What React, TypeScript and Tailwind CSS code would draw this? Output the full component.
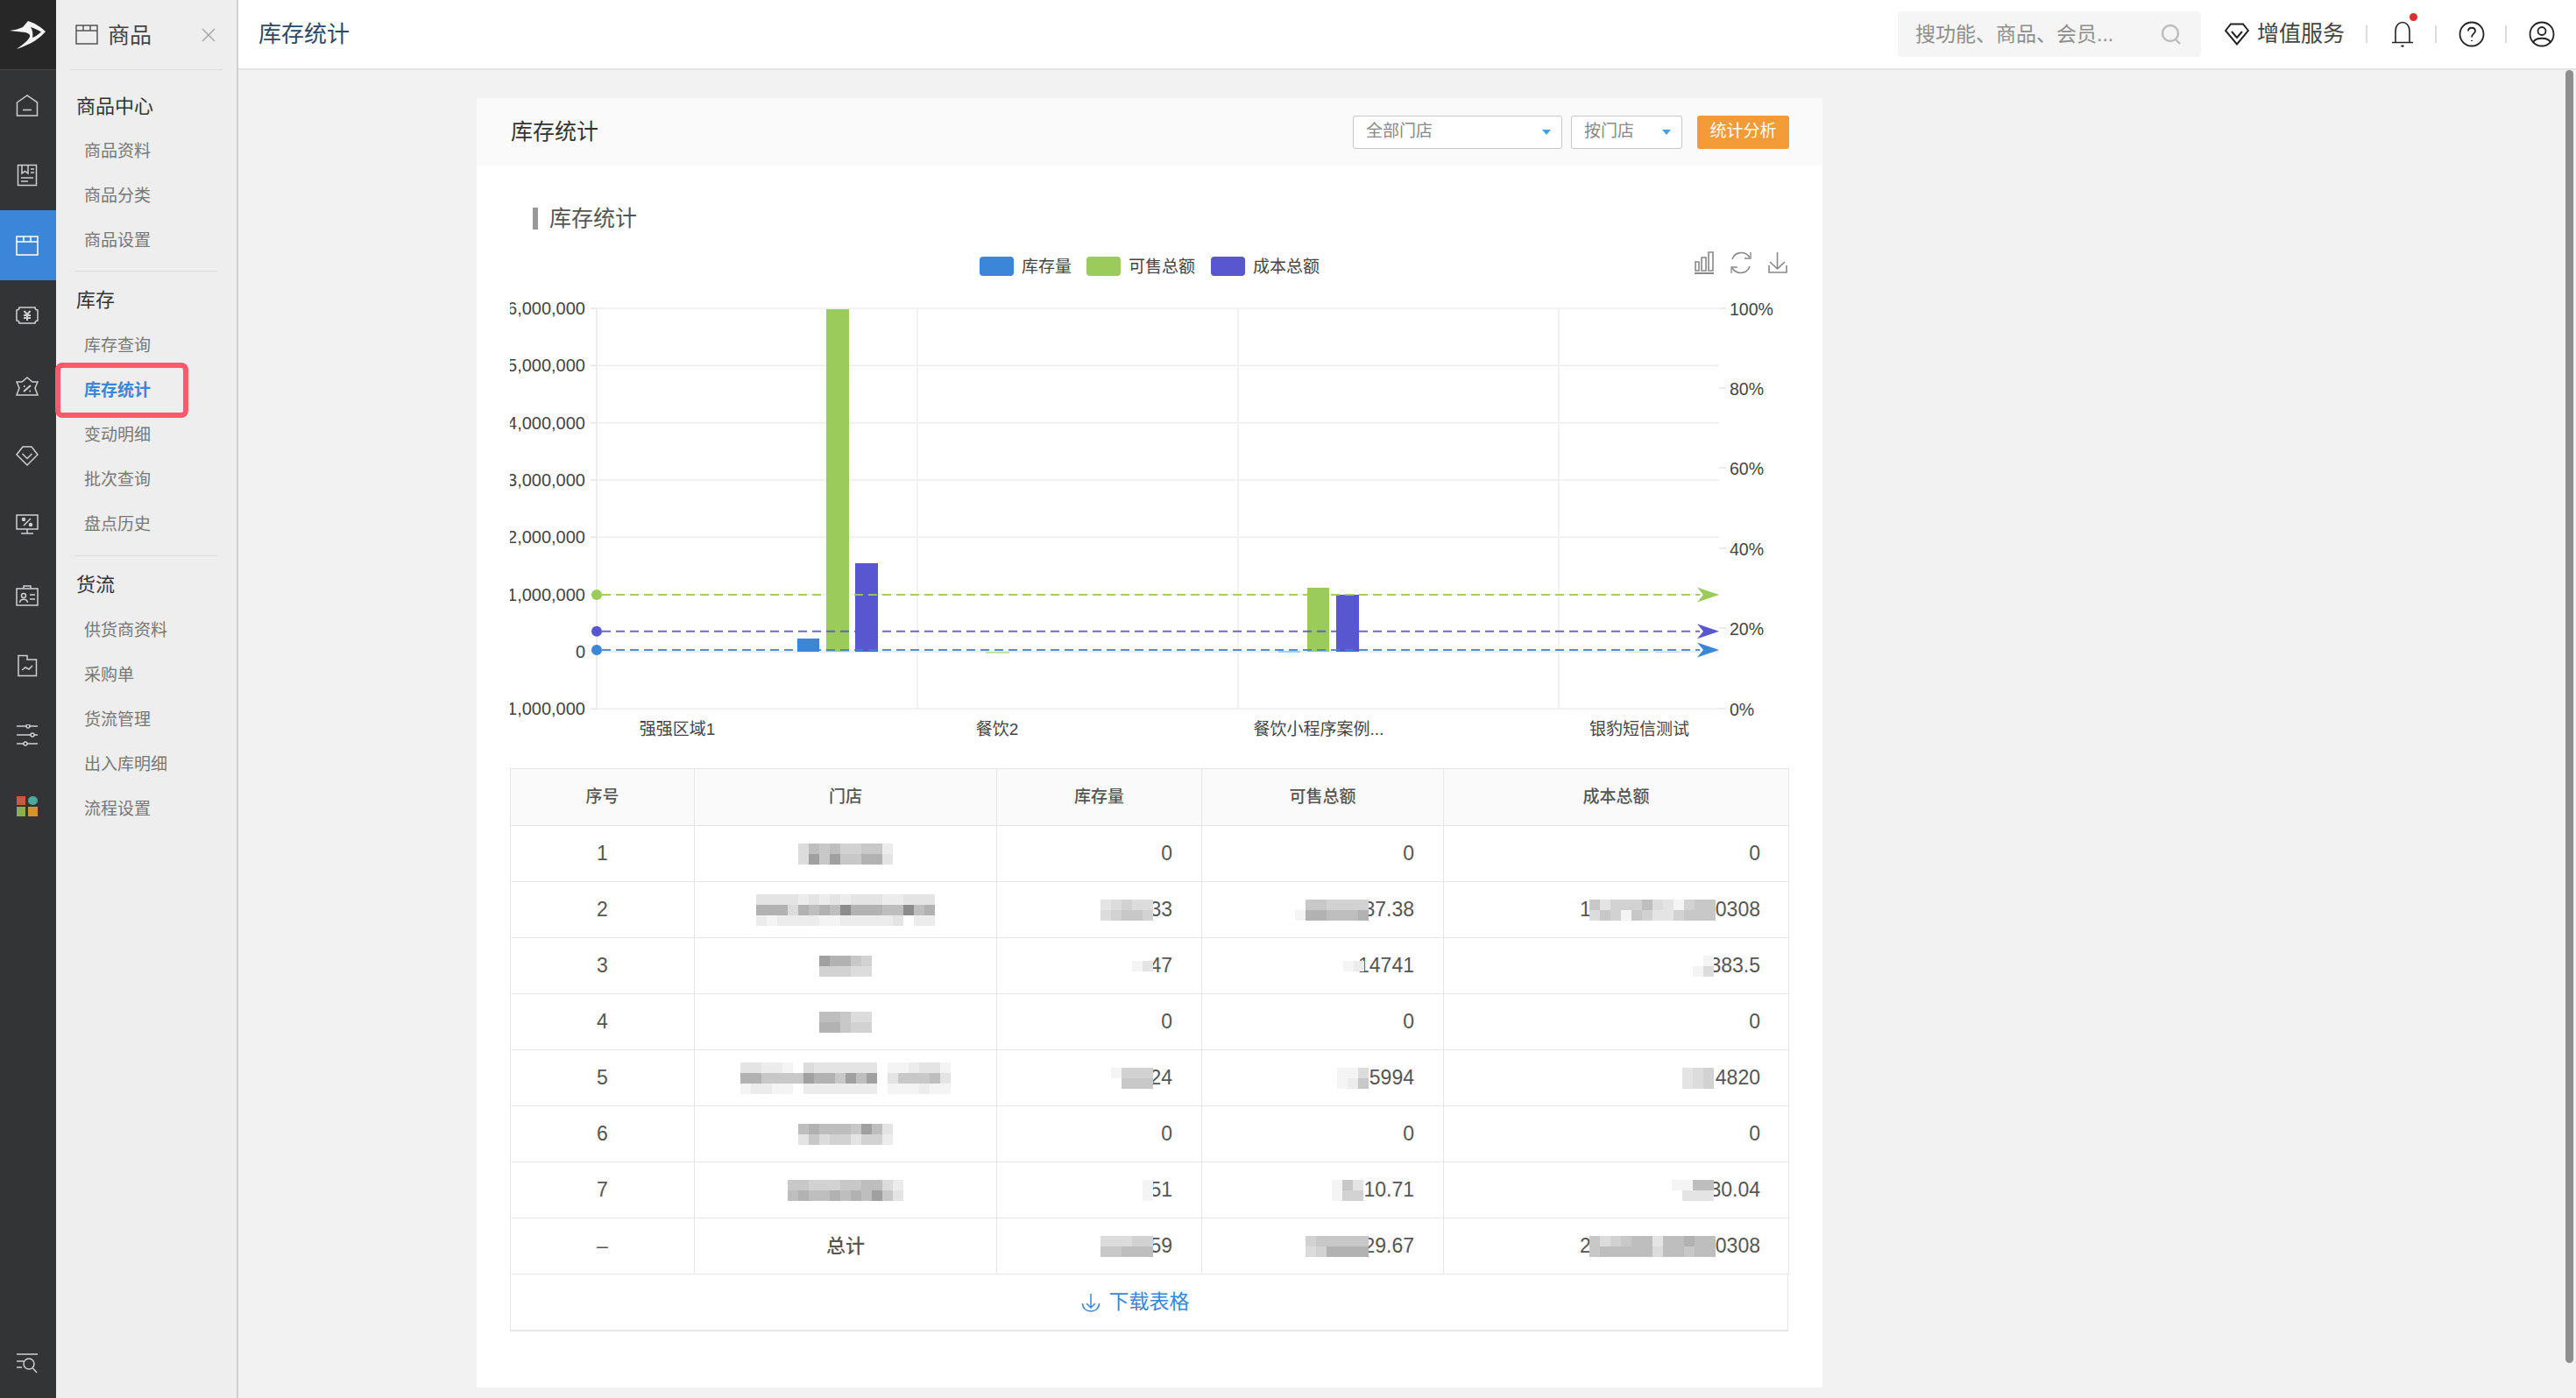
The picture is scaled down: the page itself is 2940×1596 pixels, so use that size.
import type { ReactNode } from 'react';

// grey steps of the pixelated masks, one character per 12px block
const shade: Record<string, string> = {
  '0': 'bg-transparent',
  '1': 'bg-[#f4f4f4]',
  '2': 'bg-[#ececec]',
  '3': 'bg-[#e4e4e4]',
  '4': 'bg-[#dcdcdc]',
  '5': 'bg-[#d2d2d2]',
  '6': 'bg-[#c8c8c8]',
  '7': 'bg-[#bebebe]',
  '8': 'bg-[#b2b2b2]',
  '9': 'bg-[#a0a0a0]',
  a: 'bg-[#8c8c8c]',
};

function Mosaic({ rows, className = '' }: { rows: string[]; className?: string }) {
  return (
    <div className={`relative z-10 flex flex-col shrink-0 ${className}`}>
      {rows.map((row, i) => (
        <div key={i} className="flex">
          {row.split('').map((c, j) => (
            <span key={j} className={`w-3 h-3 ${shade[c]}`} />
          ))}
        </div>
      ))}
    </div>
  );
}

function RailSvg({ children }: { children: ReactNode }) {
  return (
    <svg viewBox="0 0 26 26" className="w-[26px] h-[26px]" fill="none" stroke="currentColor" strokeWidth="1.5">
      {children}
    </svg>
  );
}

const railIcons: ReactNode[] = [
  <path key="home" d="M1.5 10 L13 2 L24.5 10 V25 H1.5 Z M8 18.5 H18" />,
  <g key="notes">
    <rect x="2.5" y="1.5" width="21" height="23" />
    <path d="M7 1.5 V11 L10.5 8.5 L14 11 V1.5 M17 6 H21 M17 10 H21 M6 16 H20 M6 20 H14" />
  </g>,
  <g key="box">
    <rect x="1" y="3" width="24" height="21" />
    <path d="M1 9 H9 V3 M17 3 V9 H25 M9 9 H17" />
  </g>,
  <g key="money">
    <path d="M4 4 H22 A3 3 0 0 0 25 7 V19 A3 3 0 0 0 22 22 H4 A3 3 0 0 0 1 19 V7 A3 3 0 0 0 4 4 Z" />
    <path d="M9.5 8 L13 12 L16.5 8 M9 13 H17 M9 16 H17 M13 12 V19" strokeWidth="2" />
  </g>,
  <g key="ticket">
    <path d="M1 9 H7 L13 4 L19 9 H25 L22 16 L25 24 H1 L4 16 Z" />
    <path d="M9 20 L17 13 M9 14 H10.5 M15.5 19.5 H17" strokeWidth="2" />
  </g>,
  <path key="gem" d="M8 3 H18 L25 12 L13 24 L1 12 Z M7.5 11 L13 16.5 L18.5 11" />,
  <g key="monitor">
    <rect x="1" y="1" width="24" height="16" />
    <path d="M13 17 V22 M6 22 H20 M9 13 L17 5" />
    <circle cx="9" cy="6" r="1.5" fill="currentColor" />
    <circle cx="17" cy="12" r="1.5" fill="currentColor" />
  </g>,
  <g key="badge">
    <rect x="1" y="5" width="24" height="19" />
    <path d="M9 5 V2 H17 V5 M4.5 21 C5 16 13 16 13.5 21 M16 12 H22 M16 17 H22" />
    <circle cx="9" cy="13" r="2.5" />
  </g>,
  <path key="folder" d="M3 1.5 H13 V6 H23.5 V24.5 H3 Z M7 18 L11 15 L15 17 L19 13" />,
  <g key="sliders">
    <path d="M1 2 H25 M1 12 H25 M1 22 H25" />
    <circle cx="14" cy="2" r="2" fill="#323436" />
    <circle cx="19" cy="12" r="2" fill="#323436" />
    <circle cx="11" cy="22" r="2" fill="#323436" />
  </g>,
];

function Rail() {
  return (
    <aside className="w-[64px] shrink-0 bg-[#323436] flex flex-col text-[#cfcfcf]">
      <div className="h-[80px] bg-[#272727] border-b border-[#444] flex items-center justify-center pr-px">
        <svg viewBox="0 0 42 34" className="w-[42px] h-[34px]" fill="#f4f4f4" fillRule="evenodd">
          <path d="M0 12 C6 11 11 10 15 8 C17 6 19 3 21 1 C28 3 36 8 41 13 C35 20 26 27 8 33 C13 29 20 25 23 19 C24 17 22 15 18 14 C12 13 6 13 0 12 Z M24 8 C28 9 32 11 36 13.5 C32 17 29 19 26 20 C27 16 26 11 24 8 Z" />
        </svg>
      </div>
      {railIcons.map((icon, i) => (
        <div key={i} className={`h-[80px] shrink-0 flex items-center justify-center pr-[3px] ${i === 2 ? 'bg-[#3b86d8] text-white' : ''}`}>
          <RailSvg>{icon}</RailSvg>
        </div>
      ))}
      <div className="h-[80px] shrink-0 flex items-center justify-center pr-[3px]">
        <svg viewBox="0 0 24 24" className="w-[24px] h-[24px]">
          <rect x="0" y="1" width="10" height="10" fill="#c85a38" />
          <ellipse cx="18.5" cy="6" rx="5.5" ry="5" fill="#4fa89c" />
          <rect x="0" y="13" width="10" height="11" fill="#8ab04a" />
          <rect x="13" y="13" width="11" height="11" fill="#d9902f" />
        </svg>
      </div>
      <div className="mt-auto h-[78px] flex items-center justify-center pr-[3px]">
        <RailSvg>
          <path d="M1 2 H25 M1 10 H9 M1 17 H7 M19.5 18 L24 23" />
          <circle cx="15" cy="13" r="6" />
        </RailSvg>
      </div>
    </aside>
  );
}

const sections = [
  { title: '商品中心', box: 'pt-[19px] pb-[8px]', gap: 'mb-[5px]', items: ['商品资料', '商品分类', '商品设置'] },
  { title: '库存', box: 'pt-[10px] pb-[9px]', gap: 'mb-[6px]', items: ['库存查询', '库存统计', '变动明细', '批次查询', '盘点历史'] },
  { title: '货流', box: 'pt-[10px]', gap: 'mb-[6px]', items: ['供货商资料', '采购单', '货流管理', '出入库明细', '流程设置'] },
];

function SubNav() {
  return (
    <nav className="w-[208px] shrink-0 bg-[#eeeeee] border-r-2 border-[#cfcfcf]">
      <div className="h-[80px] mx-[16px] border-b border-[#dcdcdc] flex items-center pl-[6px]">
        <svg viewBox="0 0 26 23" className="w-[26px] h-[23px]" fill="none" stroke="#555" strokeWidth="1.5">
          <rect x="1" y="1" width="24" height="21" />
          <path d="M1 7 H9 V1 M17 1 V7 H25 M9 7 H17" />
        </svg>
        <span className="ml-[11px] pt-[2px] text-[25px] text-[#444]">商品</span>
        <svg viewBox="0 0 16 16" className="ml-auto mr-[8px] w-[16px] h-[16px]" stroke="#aaa" strokeWidth="1.6">
          <path d="M1 1 L15 15 M15 1 L1 15" />
        </svg>
      </div>
      {sections.map((s, i) => (
        <div key={s.title} className={`mx-[22px] ${s.box} ${i < 2 ? 'border-b border-[#dcdcdc]' : ''}`}>
          <div className={`h-[44px] ${s.gap} flex items-center px-px text-[22px] text-[#333]`}>{s.title}</div>
          {s.items.map((item) => (
            <div
              key={item}
              className={`relative h-[51px] flex items-center pl-[10px] text-[19px] ${item === '库存统计' ? 'text-[#3b86d8] font-bold' : 'text-[#777]'}`}
            >
              {item}
              {item === '库存统计' && (
                <span className="absolute left-[-23px] right-[33px] top-[-7px] bottom-[-5px] border-[6px] border-[#fc5a6c] rounded-[8px] z-10" />
              )}
            </div>
          ))}
        </div>
      ))}
    </nav>
  );
}

function TopBar() {
  return (
    <header className="h-[80px] shrink-0 bg-white border-b-2 border-[#e3e3e3] flex items-center pl-[23px] pr-[24px]">
      <h1 className="text-[26px] text-[#2c4a66]">库存统计</h1>
      <div className="ml-auto w-[346px] h-[52px] bg-[#f5f5f5] rounded-[4px] flex items-center pl-[20px] pr-[22px]">
        <span className="text-[23px] text-[#8e8e8e]">搜功能、商品、会员...</span>
        <svg viewBox="0 0 24 24" className="ml-auto w-[24px] h-[24px]" fill="none" stroke="#bdbdbd" strokeWidth="2.4">
          <circle cx="11" cy="11" r="9" />
          <path d="M17 18 L22 23" />
        </svg>
      </div>
      <svg viewBox="0 0 28 26" className="ml-[27px] w-[28px] h-[26px]" fill="none" stroke="#222" strokeWidth="2">
        <path d="M7 1.5 H21 L27 9 L14 24.5 L1 9 Z M8 10 L14 17 L20 10" />
      </svg>
      <span className="ml-[9px] w-[100px] text-[25px] text-[#444]">增值服务</span>
      <span className="ml-[24px] w-[2px] h-[20px] bg-[#dddddd]" />
      <div className="relative ml-[27px]">
        <svg viewBox="0 0 26 30" className="w-[26px] h-[30px]" fill="none" stroke="#222" strokeWidth="1.6">
          <path d="M5 24 V11 C5 5 9 1.5 13 1.5 C17 1.5 21 5 21 11 V24 M1 24.5 H25 M11.5 28 L13 29 L14.5 28" />
        </svg>
        <span className="absolute top-[-9px] right-[-4px] w-[9px] h-[9px] rounded-full bg-[#d8302f]" />
      </div>
      <span className="ml-[24px] w-[2px] h-[20px] bg-[#dddddd]" />
      <svg viewBox="0 0 30 30" className="ml-[25px] w-[30px] h-[30px]" fill="none" stroke="#222" strokeWidth="1.8">
        <circle cx="15" cy="15" r="13.5" />
        <path d="M11 11.5 C11 6.5 19 6.5 19 11.5 C19 14.5 15 14.5 15 18.5 M15 22 V23" />
      </svg>
      <span className="ml-[23px] w-[2px] h-[20px] bg-[#dddddd]" />
      <svg viewBox="0 0 30 30" className="ml-[25px] w-[30px] h-[30px]" fill="none" stroke="#222" strokeWidth="1.8">
        <circle cx="15" cy="15" r="13.5" />
        <circle cx="15" cy="11.5" r="4.5" />
        <path d="M5 25 C7 18 23 18 25 25" />
      </svg>
    </header>
  );
}

function Select({ label, width }: { label: string; width: string }) {
  return (
    <div className={`${width} h-[38px] bg-white border border-[#c8c8c8] rounded-[3px] flex items-center justify-between pl-[14px] pr-[12px] text-[19px] text-[#888]`}>
      {label}
      <span className="w-0 h-0 border-x-[5px] border-t-[6px] border-x-transparent border-t-[#4a9fd8]" />
    </div>
  );
}

const G = '#9bcb5b';
const B = '#3b86d8';
const P = '#5857cf';
const gridY = [352, 417.3, 482.7, 548, 613.3, 678.7, 744, 809.3];
const gridX = [1047, 1413, 1779];
const leftLabels = ['6,000,000', '5,000,000', '4,000,000', '3,000,000', '2,000,000', '1,000,000', '0', '1,000,000'];
const rightLabels: [string, number][] = [['100%', 353], ['80%', 444], ['60%', 535], ['40%', 627], ['20%', 718], ['0%', 810]];
const catLabels: [string, number][] = [['强强区域1', 773], ['餐饮2', 1138], ['餐饮小程序案例...', 1505], ['银豹短信测试', 1871]];
const bars: [number, number, number, number, string][] = [
  [910, 729, 25, 15, B],
  [943, 353, 26, 391, G],
  [976, 643, 26, 101, P],
  [1125, 744, 27, 2, '#c5e0a3'],
  [1459, 743, 25, 2, '#a5cdf0'],
  [1492, 671, 25, 73, G],
  [1525, 679, 26, 65, P],
  [1859, 744, 22, 1, '#dcebc6'],
  [1890, 744, 27, 1, '#cfcff0'],
];
const markLines: [number, string][] = [[679, G], [720.7, P], [742, B]];
const legend: [number, string, string][] = [[1118, B, '库存量'], [1240, G, '可售总额'], [1382, P, '成本总额']];

function StockChart() {
  return (
    <svg viewBox="582 280 1460 597" className="block w-[1460px] h-[597px]">
      {legend.map(([x, color, label]) => (
        <g key={label}>
          <rect x={x} y={293} width={39} height={22} rx={4} fill={color} />
          <text x={x + 48} y={311} fontSize="19" fill="#444">{label}</text>
        </g>
      ))}

      <g fill="none" stroke="#888" strokeWidth="1.6">
        <path d="M1935 299 H1939 V309 H1935 Z M1942 294 H1947 V309 H1942 Z M1950 288 H1955 V309 H1950 Z" />
        <path d="M1934 312 H1956" strokeWidth="2" />
        <path d="M1977 296 C1980 287 1992 286 1997 294 M1997 304 C1994 313 1982 314 1977 306" />
        <path d="M1998 288 V295 H1991 M1976 312 V305 H1983" strokeWidth="1.3" />
        <path d="M2028.5 288 V307 M2020 299 L2028.5 307 L2037 299" />
        <path d="M2019 303 V311 H2039 V303" />
      </g>

      {gridX.map((x) => (
        <line key={x} x1={x} x2={x} y1={352} y2={810} stroke="#eeeeee" strokeWidth="1.5" />
      ))}
      {gridY.map((y) => (
        <line key={y} x1={681} x2={1962} y1={y} y2={y} stroke="#eeeeee" strokeWidth={y === 744 ? 3 : 1.5} />
      ))}
      <line x1={681} x2={681} y1={352} y2={810} stroke="#eeeeee" strokeWidth="2" />
      {gridY.map((y) => (
        <line key={y} x1={674} x2={681} y1={y} y2={y} stroke="#e4e4e4" strokeWidth="1.5" />
      ))}
      {rightLabels.map(([, y]) => (
        <line key={y} x1={1962} x2={1970} y1={y - 1} y2={y - 1} stroke="#e4e4e4" strokeWidth="1.5" />
      ))}

      {bars.map(([x, y, w, h, color]) => (
        <rect key={x} x={x} y={y} width={w} height={h} fill={color} />
      ))}

      {markLines.map(([y, color]) => (
        <g key={y}>
          <circle cx={681} cy={y} r={6} fill={color} />
          <line x1={687} x2={1940} y1={y} y2={y} stroke={color} strokeWidth="2" strokeDasharray="10 6" opacity="0.9" />
          <path d={`M1962 ${y} L1937 ${y - 8.5} L1944 ${y} L1937 ${y + 8.5} Z`} fill={color} />
        </g>
      ))}

      {leftLabels.map((label, i) => (
        <text key={i} x={668} y={gridY[i] + 7} textAnchor="end" fontSize="20" fill="#444">{label}</text>
      ))}
      {rightLabels.map(([label, y]) => (
        <text key={label} x={1974} y={y + 7} fontSize="19.5" fill="#444">{label}</text>
      ))}
      {catLabels.map(([label, x]) => (
        <text key={label} x={x} y={839} textAnchor="middle" fontSize="19" fill="#444">{label}</text>
      ))}
    </svg>
  );
}

interface NumCell {
  text: string;
  pre?: string;
  mask?: string[];
  overlap?: string;
}

interface Row {
  no: string;
  store: string[] | string;
  qty: NumCell;
  sale: NumCell;
  cost: NumCell;
}

const rows: Row[] = [
  {
    no: '1',
    store: ['476755662', '496966883'],
    qty: { text: '0' },
    sale: { text: '0' },
    cost: { text: '0' },
  },
  {
    no: '2',
    store: ['33332323233322333', '88848787a88877a78', '21222211222223022'],
    qty: { text: '33', mask: ['34544', '45665'], overlap: '-mr-[4px]' },
    sale: { text: '37.38', mask: ['0665555', '1887778'], overlap: '-mr-[6px]' },
    cost: { pre: '1', text: '0308', mask: ['635557431566', '465165335666'], overlap: '-ml-[2px]' },
  },
  {
    no: '3',
    store: ['98865', '55544'],
    qty: { text: '47', mask: ['13'], overlap: '-mr-[4px]' },
    sale: { text: '14741', mask: ['12'], overlap: '-mr-[7px]' },
    cost: { text: '383.5', mask: ['01', '14'], overlap: '-mr-[5px]' },
  },
  {
    no: '4',
    store: ['77644', '88655'],
    qty: { text: '0' },
    sale: { text: '0' },
    cost: { text: '0' },
  },
  {
    no: '5',
    store: ['33221043333330112331', '88666698869790366673', '12211022222220111211'],
    qty: { text: '24', mask: ['1555', '0666'], overlap: '-mr-[4px]' },
    sale: { text: '5994', mask: ['114', '126'], overlap: 'mr-px' },
    cost: { text: '4820', mask: ['345', '345'], overlap: 'mr-[2px]' },
  },
  {
    no: '6',
    store: ['787776973', '364553552'],
    qty: { text: '0' },
    sale: { text: '0' },
    cost: { text: '0' },
  },
  {
    no: '7',
    store: ['66555667742', '78778787963'],
    qty: { text: '51', mask: ['1', '1'], overlap: '-mr-[4px]' },
    sale: { text: '210.71', mask: ['163', '155'], overlap: '-mr-[12px]' },
    cost: { text: '30.04', mask: ['1177', '0333'], overlap: '-mr-[5px]' },
  },
  {
    no: '–',
    store: '总计',
    qty: { text: '59', mask: ['44455', '66777'], overlap: '-mr-[4px]' },
    sale: { text: '29.67', mask: ['566666', '458888'], overlap: '-mr-[6px]' },
    cost: { pre: '2', text: '0308', mask: ['645677377877', '677777477677'], overlap: '-ml-[2px]' },
  },
];

function NumberCell({ cell, className }: { cell: NumCell; className: string }) {
  return (
    <td className={`border border-[#e6e6e6] ${className}`}>
      <div className="flex items-center justify-end">
        {cell.pre && <span>{cell.pre}</span>}
        {cell.mask && <Mosaic rows={cell.mask} className={cell.overlap} />}
        <span>{cell.text}</span>
      </div>
    </td>
  );
}

function StockTable() {
  const heads = ['序号', '门店', '库存量', '可售总额', '成本总额'];
  return (
    <table className="w-[1459px] table-fixed border-collapse text-[23px] text-[#555]">
      <colgroup>
        <col className="w-[210px]" />
        <col className="w-[345px]" />
        <col className="w-[234px]" />
        <col className="w-[276px]" />
        <col className="w-[394px]" />
      </colgroup>
      <thead>
        <tr className="h-[65px] bg-[#fafafa]">
          {heads.map((h) => (
            <th key={h} className="border border-[#e6e6e6] text-[19px] font-medium text-[#555]">{h}</th>
          ))}
        </tr>
      </thead>
      <tbody>
        {rows.map((r) => (
          <tr key={r.no} className="h-[64px]">
            <td className="border border-[#e6e6e6] text-center">{r.no}</td>
            <td className="border border-[#e6e6e6]">
              <div className="flex justify-center">
                {typeof r.store === 'string' ? <span className="text-[22px] font-medium">{r.store}</span> : <Mosaic rows={r.store} />}
              </div>
            </td>
            <NumberCell cell={r.qty} className="pr-[33px]" />
            <NumberCell cell={r.sale} className="pr-[33px]" />
            <NumberCell cell={r.cost} className="pr-[32px]" />
          </tr>
        ))}
      </tbody>
    </table>
  );
}

export default function App() {
  return (
    <div className="flex w-[2940px] h-[1596px] overflow-hidden font-['Liberation_Sans','Noto_Sans_CJK_SC',sans-serif]">
      <Rail />
      <SubNav />
      <div className="flex-1 min-w-0 flex flex-col relative">
        <TopBar />
        <main className="flex-1 bg-[#f2f2f2] pl-[272px] pt-[32px]">
          <section className="w-[1536px] bg-white">
            <div className="h-[77px] bg-[#fafafa] flex items-center justify-between pl-[39px] pr-[38px]">
              <h2 className="text-[25px] text-[#333]">库存统计</h2>
              <div className="flex items-center">
                <Select label="全部门店" width="w-[239px]" />
                <div className="w-[10px]" />
                <Select label="按门店" width="w-[127px]" />
                <button className="ml-[17px] w-[105px] h-[38px] bg-[#f39c37] rounded-[3px] text-[19px] text-white">统计分析</button>
              </div>
            </div>
            <div className="pl-[38px] pt-[48px] pb-[64px]">
              <div className="h-[25px] flex items-center pl-[26px]">
                <div className="flex items-center border-l-[6px] border-[#999] h-[25px] pl-[13px] text-[25px] text-[#555]">库存统计</div>
              </div>
              <div className="h-[18px]" />
              <StockChart />
              <StockTable />
              <div className="w-[1459px] h-[65px] border-x border-b-2 border-[#e6e6e6] flex items-center justify-center pr-[32px] text-[23px] text-[#3b86d8]">
                <svg viewBox="0 0 22 22" className="w-[22px] h-[22px] mr-[10px]" fill="none" stroke="#3b86d8" strokeWidth="1.5">
                  <path d="M11 1 V17 M6 12 L11 17 L16 12 M1.5 12 C1.5 24 20.5 24 20.5 12" />
                </svg>
                下载表格
              </div>
            </div>
          </section>
        </main>
        <div className="absolute top-[80px] right-[3px] w-[9px] h-[1476px] rounded-full bg-[#8f8f8f]" />
      </div>
    </div>
  );
}
